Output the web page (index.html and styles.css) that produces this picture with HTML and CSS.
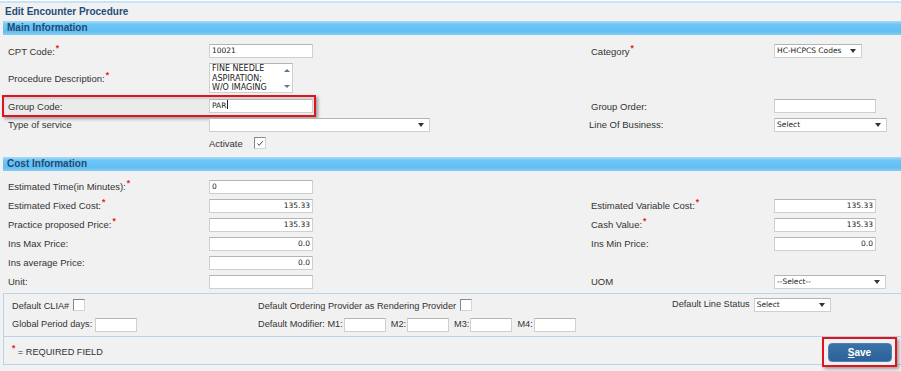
FILE: index.html
```html
<!DOCTYPE html>
<html>
<head>
  <link rel="stylesheet" href="styles.css">
</head>
<body>
  <div class="page">
    <div class="title">Edit Encounter Procedure</div>

    <div class="bar">Main Information</div>
    <div class="form main-info">
      <div class="row r-cpt">
        <label>CPT Code:<span class="req">*</span></label>
        <div><div class="input w-104">10021</div></div>
        <label>Category<span class="req">*</span></label>
        <div><div class="select w-88">HC-HCPCS Codes<span class="arrow"></span></div></div>
      </div>
      <div class="row r-desc">
        <label>Procedure Description:<span class="req">*</span></label>
        <div>
          <div class="textarea">
            <div class="textarea-text">FINE NEEDLE<br>ASPIRATION;<br>W/O IMAGING</div>
            <div class="scroll">
              <span class="up"></span>
              <span class="down"></span>
            </div>
          </div>
        </div>
        <div></div>
        <div></div>
      </div>
      <div class="row r-group">
        <div class="highlight">
          <label>Group Code:</label>
          <div class="input w-104">PAR<span class="caret"></span></div>
        </div>
        <label>Group Order:</label>
        <div><div class="input w-102"></div></div>
      </div>
      <div class="row r-type">
        <label>Type of service</label>
        <div><div class="select w-221"><span class="arrow"></span></div></div>
        <label class="shift">Line Of Business:</label>
        <div><div class="select w-113">Select<span class="arrow"></span></div></div>
      </div>
      <div class="row r-activate">
        <div></div>
        <div class="activate">
          <span>Activate</span>
          <span class="checkbox">
            <svg width="8" height="7" viewBox="0 0 8 7"><path d="M1.5 3.5 L3.2 5.3 L6.8 1.2" fill="none" stroke="#3b4b5c" stroke-width="1"/></svg>
          </span>
        </div>
        <div></div>
        <div></div>
      </div>
    </div>

    <div class="bar cost-bar">Cost Information</div>
    <div class="form cost-info">
      <div class="row">
        <label>Estimated Time(in Minutes):<span class="req">*</span></label>
        <div><div class="input w-104">0</div></div>
        <div></div>
        <div></div>
      </div>
      <div class="row">
        <label>Estimated Fixed Cost:<span class="req">*</span></label>
        <div><div class="input w-104 num">135.33</div></div>
        <label>Estimated Variable Cost:<span class="req">*</span></label>
        <div><div class="input w-102 num">135.33</div></div>
      </div>
      <div class="row">
        <label>Practice proposed Price:<span class="req">*</span></label>
        <div><div class="input w-104 num">135.33</div></div>
        <label>Cash Value:<span class="req">*</span></label>
        <div><div class="input w-102 num">135.33</div></div>
      </div>
      <div class="row">
        <label>Ins Max Price:</label>
        <div><div class="input w-104 num">0.0</div></div>
        <label>Ins Min Price:</label>
        <div><div class="input w-102 num">0.0</div></div>
      </div>
      <div class="row">
        <label>Ins average Price:</label>
        <div><div class="input w-104 num">0.0</div></div>
        <div></div>
        <div></div>
      </div>
      <div class="row">
        <label>Unit:</label>
        <div><div class="input w-104"></div></div>
        <label>UOM</label>
        <div><div class="select w-112">--Select--<span class="arrow"></span></div></div>
      </div>
    </div>

    <div class="defaults">
      <div class="drow">
        <div class="cell">Default CLIA#<span class="checkbox"></span></div>
        <div class="cell">Default Ordering Provider as Rendering Provider<span class="checkbox"></span></div>
        <div class="cell">Default Line Status<span class="select w-77">Select<span class="arrow"></span></span></div>
      </div>
      <div class="drow">
        <div class="cell">Global Period days:<span class="input w-42"></span></div>
        <div class="cell modifiers">Default Modifier: M1:<span class="input w-42"></span><span class="mod">M2:</span><span class="input w-42"></span><span class="mod">M3:</span><span class="input w-42"></span><span class="mod">M4:</span><span class="input w-42"></span></div>
        <div class="cell"></div>
      </div>
    </div>

    <div class="footer">
      <div class="required"><span class="req">*</span> = REQUIRED FIELD</div>
      <div class="save-box">
        <button class="save"><u>S</u>ave</button>
      </div>
    </div>
  </div>
</body>
</html>
```

FILE: styles.css
```css
body {
  margin: 0;
  background-color: #fff;
  font-family: "Liberation Sans", Arial, sans-serif;
  font-size: 9.5px;
  color: #333;
}

.page {
  width: 901px;
  height: 370px;
  margin-top: 1px;
  background-color: #f1f1f1;
  border-top: 2px solid #c4e4f7;
  box-sizing: border-box;
  overflow: hidden;
}

.title {
  height: 18px;
  line-height: 17px;
  padding-left: 5px;
  font-size: 10px;
  font-weight: bold;
  color: #234d78;
}

.bar {
  height: 14px;
  line-height: 14px;
  margin-left: 3px;
  padding-left: 4px;
  font-size: 10px;
  font-weight: bold;
  color: #1f4a75;
  background: linear-gradient(#a6dbf8 0, #6dc6f5 25%, #62bff3 75%, #86cdf5 100%);
}

.cost-bar {
  margin-top: 3px;
}

.form {
  padding-left: 8px;
}

.main-info {
  margin-top: 6px;
}

.cost-info {
  margin-top: 6px;
}

.row {
  display: grid;
  grid-template-columns: 201px 382px 183px 127px;
  align-items: center;
  height: 19px;
}

.main-info .r-cpt { height: 20px; }
.main-info .r-desc { height: 34px; }
.main-info .r-group { height: 22px; }
.main-info .r-type { height: 15px; }
.main-info .r-activate { height: 22px; }

label {
  white-space: nowrap;
}

label.shift {
  margin-left: -2px;
}

.req {
  color: #e02424;
  font-weight: bold;
  font-size: 8.5px;
  vertical-align: 4px;
  line-height: 0;
  margin-left: 1px;
}

.input,
.select {
  display: inline-block;
  position: relative;
  height: 14px;
  line-height: 12px;
  box-sizing: border-box;
  padding: 0 2px;
  background-color: #fff;
  border: 1px solid #cfcfcf;
  border-top-color: #b4b4b4;
  font-family: "DejaVu Sans", Verdana, sans-serif;
  font-size: 7.5px;
  color: #222;
  vertical-align: middle;
  white-space: nowrap;
}

.input.num {
  text-align: right;
}

.select {
  padding-right: 14px;
}

.arrow {
  position: absolute;
  right: 5px;
  top: 4px;
  width: 0;
  height: 0;
  border-left: 3px solid transparent;
  border-right: 3px solid transparent;
  border-top: 4px solid #333;
}

.w-42 { width: 42px; }
.w-77 { width: 77px; }
.w-88 { width: 88px; }
.w-102 { width: 102px; }
.w-104 { width: 104px; }
.w-112 { width: 112px; }
.w-113 { width: 113px; }
.w-221 { width: 221px; }

.caret {
  display: inline-block;
  width: 1px;
  height: 9px;
  margin-left: 1px;
  vertical-align: -1px;
  background-color: #222;
}

.textarea {
  display: flex;
  width: 84px;
  height: 30px;
  box-sizing: border-box;
  background-color: #fff;
  border: 1px solid #cfcfcf;
  border-top-color: #b4b4b4;
  font-family: "DejaVu Sans", Verdana, sans-serif;
  font-size: 8px;
  color: #222;
}

.textarea-text {
  flex: 1;
  padding: 0 0 0 2px;
  line-height: 9.5px;
  white-space: nowrap;
  overflow: hidden;
}

.scroll {
  width: 11px;
  display: flex;
  flex-direction: column;
  justify-content: space-between;
  align-items: center;
  padding: 5px 0 4px;
}

.scroll .up {
  border-left: 3px solid transparent;
  border-right: 3px solid transparent;
  border-bottom: 3px solid #5a7896;
}

.scroll .down {
  border-left: 3px solid transparent;
  border-right: 3px solid transparent;
  border-top: 3px solid #5a7896;
}

.highlight {
  grid-column: 1 / 3;
  display: flex;
  align-items: center;
  width: 314px;
  height: 22px;
  margin-left: -6px;
  padding-left: 4px;
  box-sizing: border-box;
  border: 2px solid #e0141c;
  background-color: #ebebeb;
  box-shadow: 2px 2px 3px rgba(0, 0, 0, 0.35), inset 0 2px 2px rgba(0, 0, 0, 0.12);
}

.highlight label {
  width: 201px;
}

.activate {
  display: flex;
  align-items: center;
}

.checkbox {
  display: inline-flex;
  align-items: center;
  justify-content: center;
  width: 12px;
  height: 12px;
  box-sizing: border-box;
  background-color: #fff;
  border: 1px solid;
  border-color: #7b8b9b #d4d4d4 #d4d4d4 #7b8b9b;
  vertical-align: middle;
}

.activate .checkbox {
  margin-left: 11px;
}

.defaults {
  margin: 2px 0 0 3px;
  padding: 1px 0;
  border: 1px solid #b6d4ec;
  border-right: none;
  font-size: 9.2px;
}

.drow {
  display: grid;
  grid-template-columns: 246px 414px 1fr;
  align-items: center;
  height: 20px;
  padding-left: 8px;
}

.cell {
  white-space: nowrap;
}

.cell .checkbox {
  margin-left: 4px;
  vertical-align: -2px;
}

.cell .select {
  margin-left: 4px;
}

.cell .input {
  margin-left: 3px;
}

.modifiers .input {
  margin-left: 1px;
}

.modifiers .mod {
  margin-left: 5px;
}

.footer {
  display: flex;
  justify-content: space-between;
  height: 27px;
  margin-left: 3px;
  border: 1px solid #b6d4ec;
  border-top: none;
  border-right: none;
  font-size: 9.2px;
}

.required {
  padding: 10px 0 0 8px;
}

.required .req {
  margin: 0;
}

.save-box {
  display: flex;
  align-items: center;
  justify-content: center;
  width: 75px;
  height: 30px;
  margin-right: 4px;
  box-sizing: border-box;
  border: 2px solid #e0141c;
  background-color: #f1f1f1;
  box-shadow: 2px 2px 3px rgba(0, 0, 0, 0.35);
}

.save {
  width: 64px;
  height: 19px;
  padding: 0;
  border: 1px solid #4d80b3;
  border-radius: 4px;
  background: linear-gradient(#3a72a8, #2c6199);
  color: #fff;
  font-family: "Liberation Sans", Arial, sans-serif;
  font-size: 10px;
  font-weight: bold;
}
```
